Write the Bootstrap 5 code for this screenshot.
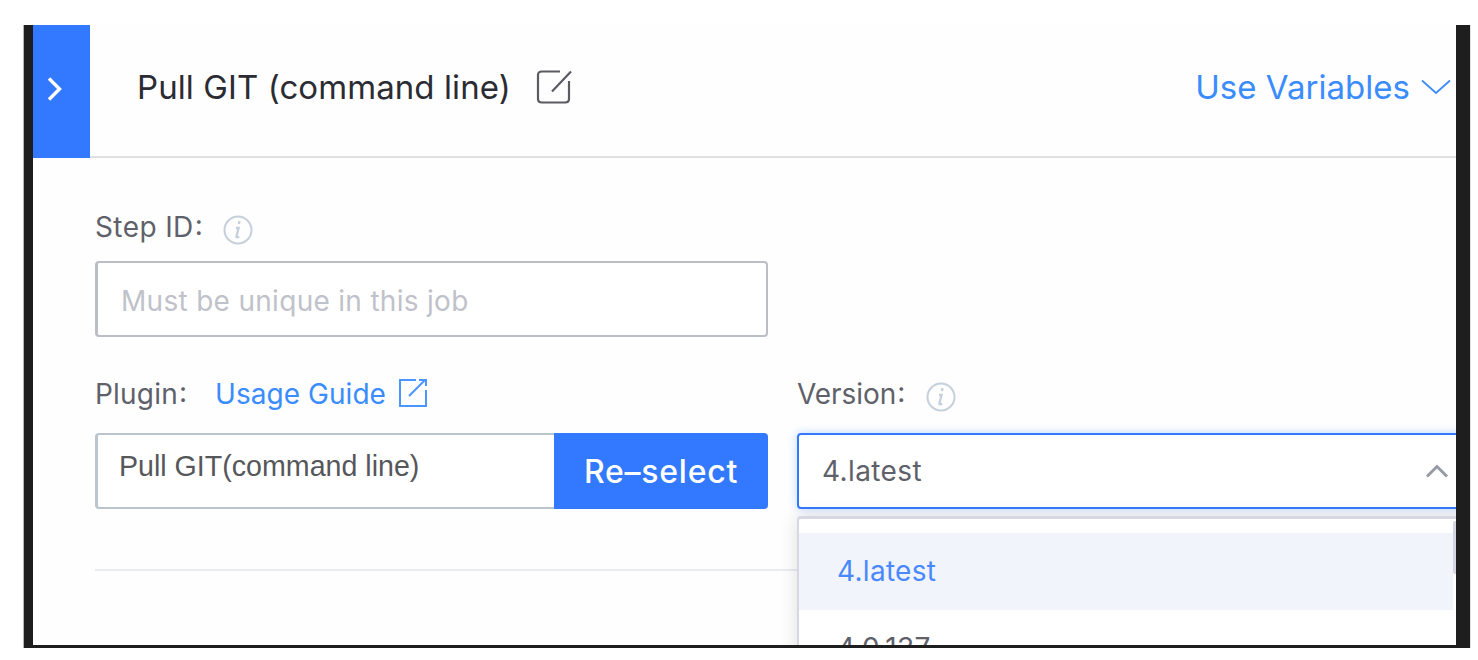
<!DOCTYPE html>
<html lang="en">
<head>
<meta charset="utf-8">
<meta name="viewport" content="width=device-width, initial-scale=1">
<title>Pull GIT (command line)</title>
<link href="https://cdn.jsdelivr.net/npm/bootstrap@5.3.0/dist/css/bootstrap.min.css" rel="stylesheet">
<style>
  body { background: #fff; padding: 25px 8px 0 24px; font-family: Inter, "Liberation Sans", sans-serif; font-size: 28px; line-height: 36px; color: #5f616a; overflow: hidden; white-space: nowrap; }
  .panel { height: 623px; background: #fefefe; border: solid #1e1e1e; border-width: 0 14px 3px 9px; box-shadow: -1px 0 0 #b4b4b4, 1px 0 0 #e2e2e2; }
  .panel-head { height: 133px; }
  .collapse-tab { width: 57px; background: #3379ff; }
  .collapse-tab svg { margin: 0 0 5px 14px; }
  .head-main { border-bottom: 2px solid #e0e1e3; padding: 0 5px 8px 47px; }
  .head-text { font-size: 33px; line-height: 42px; }
  .title { color: #2b2c33; letter-spacing: .08px; }
  .link-blue { color: #3a8cff; text-decoration: none; }
  .panel-body { padding: 51px 0 0 62px; }
  .col-left { width: 673px; }
  .col-right { width: 680px; margin-left: 29px; }
  .lbl { height: 36px; }
  .colon { margin: -5px 0 0 1px; }
  .field { height: 76px; border: 2px solid #babfc6; border-left-width: 3px; border-radius: 4px; background: #fff; }
  input.field { padding: 4px 22px 0 23px; width: 100%; letter-spacing: .3px; outline: 0; color: #63656e; }
  input.field::placeholder { color: #bfc2ca; opacity: 1; }
  .plugin-name { width: 459px; border-color: #bac5d0; border-right: 0; border-radius: 4px 0 0 4px; font-family: "Liberation Sans", sans-serif; font-size: 28.6px; color: #56575b; padding: 0 0 10px 21px; }
  .reselect { width: 214px; height: 76px; background: #3379ff; border: 0; border-radius: 0 4px 4px 0; color: #fff; font-size: 32px; font-weight: 500; letter-spacing: .75px; padding: 2px 0 0; }
  .picker { border: 2px solid #3379ff; box-shadow: 0 0 10px rgba(51,121,255,.3); padding-left: 23px; letter-spacing: .4px; }
  .picker svg { margin-left: 503px; }
  .version-menu { position: absolute; top: 83px; left: 0; width: 680px; height: 240px; background: #fff; border: 2px solid #d5d8e0; border-top-width: 3px; border-radius: 4px; padding-top: 14px; box-shadow: 0 0 18px rgba(0,0,0,.13); letter-spacing: .3px; }
  .version-item { height: 77px; width: 654px; padding: 0 0 2px 38px; }
  .version-item.current { background: #f1f5fb; color: #4a88ff; }
  .scroll-thumb { position: absolute; top: 2px; left: 654px; width: 12px; height: 53px; background: #d3d6de; border-radius: 2px; }
  .rule { height: 2px; background: #e8ecf0; margin-top: 60px; }
</style>
</head>
<body>
<main class="panel overflow-hidden">
  <header class="panel-head d-flex">
    <div class="collapse-tab d-flex align-items-center flex-shrink-0">
      <svg width="16" height="24" viewBox="0 0 16 24" fill="none" stroke="#fff" stroke-width="3.4"><path d="M2 1.5 12.5 12 2 22.5"/></svg>
    </div>
    <div class="head-main head-text flex-grow-1 d-flex align-items-center">
      <span class="title">Pull GIT (command line)</span>
      <svg style="margin-left:25px" width="38" height="36" viewBox="0 0 38 36" fill="none" stroke="#5b5b63" stroke-width="2.2"><path d="M24 2.5H6Q2 2.5 2 6V30Q2 33.500 6 33.500H29Q33 33.500 33 30V12M16 22.500 35 2.500"/></svg>
      <a href="#" class="link-blue ms-auto" style="letter-spacing:.02px">Use Variables</a>
      <svg style="margin-left:11px" width="30" height="18" viewBox="0 0 30 18" fill="none" stroke="#3a8cff" stroke-width="1.8"><path d="M1 2.500 15 15 29 2.500"/></svg>
    </div>
  </header>
  <div class="panel-body">
    <div class="col-left">
      <label class="lbl d-flex align-items-center" style="margin-bottom:16px" for="step">
        <span style="letter-spacing:.4px">Step ID</span><span class="colon">:</span>
        <svg style="margin:6px 0 0 20px" width="30" height="30" viewBox="0 0 30 30" fill="none" stroke="#c5d0dc" stroke-width="2"><circle cx="15" cy="15" r="13.5"/><path stroke-width="2.3" d="M16.4 6 16 9M13 13h2.6L13.400 21.500q-.1 1.600 2.800.3"/></svg>
      </label>
      <input id="step" class="field d-block" type="text" placeholder="Must be unique in this job">
    </div>
    <div class="d-flex" style="margin-top:39px">
      <div class="col-left flex-shrink-0">
        <div class="lbl d-flex align-items-center" style="margin-bottom:21px">
          <span style="letter-spacing:.2px">Plugin</span><span class="colon">:</span>
          <a href="#" class="link-blue" style="margin-left:28px;letter-spacing:.05px">Usage Guide</a>
          <svg style="margin:-3px 0 0 12px" width="30" height="30" viewBox="0 0 30 30" fill="none" stroke="#4b96ff" stroke-width="2"><path d="M18 2H2V28H28V12M11 18 27 2M21 2H28V8"/></svg>
        </div>
        <div class="d-flex">
          <div class="field plugin-name d-flex align-items-center">Pull GIT(command line)</div>
          <button type="button" class="reselect">Re–select</button>
        </div>
      </div>
      <div class="col-right flex-shrink-0">
        <div class="lbl d-flex align-items-center" style="margin-bottom:21px">
          <span style="letter-spacing:-.05px">Version</span><span class="colon">:</span>
          <svg style="margin:6px 0 0 21px" width="30" height="30" viewBox="0 0 30 30" fill="none" stroke="#c5d0dc" stroke-width="2"><circle cx="15" cy="15" r="13.5"/><path stroke-width="2.3" d="M16.4 6 16 9M13 13h2.6L13.400 21.500q-.1 1.600 2.800.3"/></svg>
        </div>
        <div class="position-relative">
          <div class="field picker d-flex align-items-center">
            <span>4.latest</span>
            <svg width="24" height="14" viewBox="0 0 24 14" fill="none" stroke="#979ba5" stroke-width="3"><path d="M2 12.500 12 2.500 22 12.500"/></svg>
          </div>
          <div class="version-menu">
            <div class="version-item current d-flex align-items-center">4.latest</div>
            <div class="version-item d-flex align-items-center">4.0.137</div>
            <div class="scroll-thumb"></div>
          </div>
        </div>
      </div>
    </div>
    <div class="rule"></div>
  </div>
</main>
<script src="https://cdn.jsdelivr.net/npm/bootstrap@5.3.0/dist/js/bootstrap.bundle.min.js"></script>
</body>
</html>
